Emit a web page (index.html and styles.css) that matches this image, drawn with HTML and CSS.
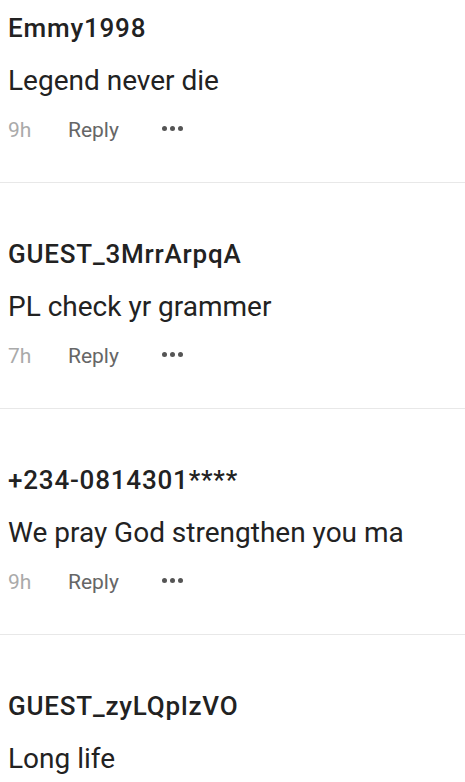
FILE: index.html
```html
<!DOCTYPE html>
<html lang="en">

<head>
    <meta charset="UTF-8">
    <meta name="viewport" content="width=device-width, initial-scale=1.0">
    <title>Comments</title>
    <link rel="stylesheet" href="styles.css">
</head>

<body>
    <section class="comments">
        <div class="comment">
            <p class="comment-name">Emmy1998</p>
            <p class="comment-text">Legend never die</p>
            <div class="comment-meta">
                <span class="comment-time">9h</span>
                <span class="comment-reply">Reply</span>
                <span class="comment-more"><i></i><i></i><i></i></span>
            </div>
        </div>
        <div class="comment">
            <p class="comment-name">GUEST_3MrrArpqA</p>
            <p class="comment-text">PL check yr grammer</p>
            <div class="comment-meta">
                <span class="comment-time">7h</span>
                <span class="comment-reply">Reply</span>
                <span class="comment-more"><i></i><i></i><i></i></span>
            </div>
        </div>
        <div class="comment">
            <p class="comment-name">+234-0814301****</p>
            <p class="comment-text">We pray God strengthen you ma</p>
            <div class="comment-meta">
                <span class="comment-time">9h</span>
                <span class="comment-reply">Reply</span>
                <span class="comment-more"><i></i><i></i><i></i></span>
            </div>
        </div>
        <div class="comment">
            <p class="comment-name">GUEST_zyLQplzVO</p>
            <p class="comment-text">Long life</p>
        </div>
    </section>
</body>

</html>
```

FILE: styles.css
```css
* {
    margin: 0;
    padding: 0;
}

body {
    background-color: #fff;
    font-family: Roboto, "Noto Sans", sans-serif;
    overflow: hidden;
}

.comment {
    padding: 55px 8px 38px;
    border-bottom: 1px solid #e8e8e8;
}

.comment:first-child {
    padding-top: 12px;
}

.comment:last-child {
    border-bottom: none;
}

.comment-name {
    font-size: 26px;
    line-height: 32px;
    font-weight: 500;
    letter-spacing: 0.8px;
    color: #222;
}

.comment-text {
    margin-top: 19px;
    font-size: 28px;
    line-height: 36px;
    color: #222;
}

.comment-meta {
    display: flex;
    align-items: center;
    margin-top: 17px;
    height: 28px;
    font-size: 21px;
}

.comment-time {
    width: 60px;
    color: #aaa;
}

.comment-reply {
    width: 94px;
    color: #666;
}

.comment-more {
    display: flex;
    gap: 3px;
    margin-bottom: 4px;
}

.comment-more i {
    width: 5px;
    height: 5px;
    border-radius: 50%;
    background-color: #555;
}
```
